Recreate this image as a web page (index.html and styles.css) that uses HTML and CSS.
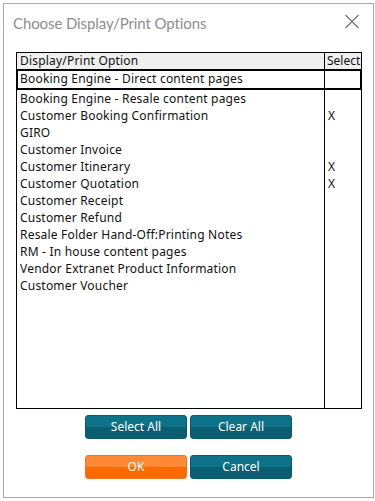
FILE: index.html
```html
<!DOCTYPE html>
<html>
<head>
<meta charset="utf-8">
<link rel="stylesheet" href="styles.css">
</head>
<body>
<div class="backdrop">
  <div class="dialog">
    <div class="titlebar">
      <span class="title">Choose Display/Print Options</span>
      <svg class="close" width="14" height="15" viewBox="0 0 14 15"><path d="M0.5 1L13.5 14M13.5 1L0.5 14" stroke="#6e6e6e" stroke-width="1.1" fill="none"/></svg>
    </div>
    <div class="table">
      <div class="row head"><div class="c1">Display/Print Option</div><div class="c2">Select</div></div>
      <div class="tbody">
        <div class="row focus"><div class="c1">Booking Engine - Direct content pages</div><div class="c2"></div></div>
        <div class="row"><div class="c1">Booking Engine - Resale content pages</div><div class="c2"></div></div>
        <div class="row"><div class="c1">Customer Booking Confirmation</div><div class="c2">X</div></div>
        <div class="row"><div class="c1">GIRO</div><div class="c2"></div></div>
        <div class="row"><div class="c1">Customer Invoice</div><div class="c2"></div></div>
        <div class="row"><div class="c1">Customer Itinerary</div><div class="c2">X</div></div>
        <div class="row"><div class="c1">Customer Quotation</div><div class="c2">X</div></div>
        <div class="row"><div class="c1">Customer Receipt</div><div class="c2"></div></div>
        <div class="row"><div class="c1">Customer Refund</div><div class="c2"></div></div>
        <div class="row"><div class="c1">Resale Folder Hand-Off:Printing Notes</div><div class="c2"></div></div>
        <div class="row"><div class="c1">RM - In house content pages</div><div class="c2"></div></div>
        <div class="row"><div class="c1">Vendor Extranet Product Information</div><div class="c2"></div></div>
        <div class="row"><div class="c1">Customer Voucher</div><div class="c2"></div></div>
        <div class="row filler"><div class="c1"></div><div class="c2"></div></div>
      </div>
    </div>
    <div class="buttons">
      <button class="btn teal">Select All</button>
      <button class="btn teal">Clear All</button>
    </div>
    <div class="buttons second">
      <button class="btn orange">OK</button>
      <button class="btn teal">Cancel</button>
    </div>
  </div>
</div>
</body>
</html>
```
FILE: styles.css
```css
* { box-sizing: border-box; }
html, body { margin: 0; padding: 0; }
body {
  width: 375px;
  height: 501px;
  background: #ffffff;
  font-family: "Noto Sans", "Open Sans", sans-serif;
  overflow: hidden;
}
.backdrop {
  padding: 3px 2px 0 3px;
}
.dialog {
  width: 371px;
  height: 495px;
  border: 1px solid #a9a9a9;
  background: #fff;
  display: flex;
  flex-direction: column;
  padding: 0 11px 0 12px;
}
.titlebar {
  height: 48px;
  display: flex;
  align-items: flex-start;
  justify-content: space-between;
  padding-top: 8px;
}
.title {
  font-family: "Lato", "Noto Sans", sans-serif;
  font-size: 15px;
  letter-spacing: -0.1px;
  color: #8e8e8e;
  margin-left: -3px;
  margin-top: 2px;
}
.close { margin-top: 2px; margin-right: 3px; }
.table {
  width: 346px;
  height: 357px;
  border: 1px solid #000;
  display: flex;
  flex-direction: column;
  font-size: 12px;
  letter-spacing: 0.2px;
  color: #111;
}
.row {
  display: grid;
  grid-template-columns: 1fr 37px;
  height: 17px;
  line-height: 17px;
}
.row .c1 { padding-left: 3px; white-space: nowrap; overflow: hidden; }
.row .c2 { border-left: 1px solid #000; padding-left: 3px; }
.head {
  background: #efefef;
  height: 16px;
  line-height: 16px;
}
.head .c2 { padding-left: 2px; letter-spacing: 0; }
.tbody {
  flex: 1;
  display: flex;
  flex-direction: column;
}
.row.focus {
  height: 21px;
  line-height: 19px;
  box-shadow: inset 0 2px 0 #000, inset -1px -2px 0 #000, inset 1px 0 0 #000;
}
.row.filler { flex: 1; }
.buttons {
  display: flex;
  justify-content: center;
  gap: 3px;
  margin-top: 6px;
  margin-left: -1px;
}
.buttons.second { margin-top: 16px; }
.btn {
  width: 102px;
  height: 24px;
  border: 1px solid #0a5a6c;
  border-radius: 3px;
  color: #fff;
  font-family: "Noto Sans", sans-serif;
  font-size: 12px;
  padding: 0;
  line-height: 22px;
}
.teal {
  background: linear-gradient(#0e7289 0%, #0e7289 50%, #0a5e71 50%, #0a5e71 100%);
}
.orange {
  border-color: #f57020;
  background: linear-gradient(#ff8936 0%, #ff8936 50%, #ff6a00 50%, #ff6a00 100%);
}
```
